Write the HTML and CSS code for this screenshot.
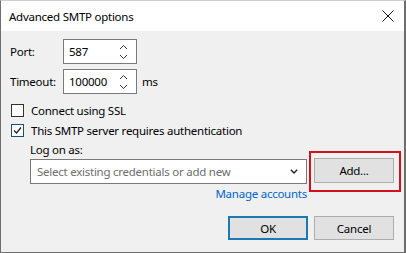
FILE: index.html
```html
<!DOCTYPE html>
<html>
<head>
<meta charset="utf-8">
<link rel="stylesheet" href="styles.css">
</head>
<body>
<div class="window">
  <div class="titlebar">
    <span class="title">Advanced SMTP options</span>
    <svg class="close" width="12" height="12" viewBox="0 0 12 12"><path d="M0.5 0.5 L11.5 11.5 M11.5 0.5 L0.5 11.5" stroke="#111" stroke-width="1" fill="none"/></svg>
  </div>
  <div class="content">
    <div class="field-row">
      <span class="label">Port:</span>
      <div class="spin">
        <span class="spin-value">587</span>
        <svg class="spin-arrows" width="9" height="16" viewBox="0 0 9 16"><path d="M1 5 L4.5 1.5 L8 5 M1 11 L4.5 14.5 L8 11" stroke="#333" stroke-width="1" fill="none"/></svg>
      </div>
    </div>
    <div class="field-row">
      <span class="label">Timeout:</span>
      <div class="spin">
        <span class="spin-value">100000</span>
        <svg class="spin-arrows" width="9" height="16" viewBox="0 0 9 16"><path d="M1 5 L4.5 1.5 L8 5 M1 11 L4.5 14.5 L8 11" stroke="#333" stroke-width="1" fill="none"/></svg>
      </div>
      <span class="unit">ms</span>
    </div>
    <div class="check-row first">
      <span class="box"></span>
      <span>Connect using SSL</span>
    </div>
    <div class="check-row">
      <span class="box checked"><svg width="11" height="11" viewBox="0 0 11 11"><path d="M2 5.5 L4.5 8 L9 2.5" stroke="#222" stroke-width="1.3" fill="none"/></svg></span>
      <span>This SMTP server requires authentication</span>
    </div>
    <div class="logon">
      <div class="logon-label">Log on as:</div>
      <div class="cred-row">
        <div class="combo">
          <span class="placeholder">Select existing credentials or add new</span>
          <svg width="8" height="5" viewBox="0 0 8 5"><path d="M0.8 0.8 L4 4 L7.2 0.8" stroke="#222" stroke-width="1.4" fill="none"/></svg>
        </div>
        <div class="highlight">
          <button class="btn add">Add...</button>
        </div>
      </div>
      <div class="manage-row"><a class="manage">Manage accounts</a></div>
    </div>
    <div class="actions">
      <button class="btn ok">OK</button>
      <button class="btn">Cancel</button>
    </div>
  </div>
</div>
</body>
</html>
```

FILE: styles.css
```css
* { box-sizing: border-box; }
html, body { margin: 0; padding: 0; }
body {
  width: 406px;
  height: 253px;
  font-family: "Noto Sans", "Open Sans", sans-serif;
  font-size: 11.5px;
  letter-spacing: -0.25px;
  color: #000;
  overflow: hidden;
}
.window {
  width: 406px;
  height: 253px;
  border: 1px solid #6e6e6e;
  border-top-color: #cfcfcf;
  border-right-width: 2px;
  background: #f0f0f0;
  display: flex;
  flex-direction: column;
}
.titlebar {
  height: 30px;
  background: #fff;
  display: flex;
  align-items: center;
  justify-content: space-between;
  padding: 0 9px 0 8px;
  flex-shrink: 0;
}
.close { margin-right: 1px; }
.content {
  padding: 8px 0 0 9px;
  display: flex;
  flex-direction: column;
}
.field-row {
  display: flex;
  align-items: center;
  height: 25px;
  margin-bottom: 5px;
}
.label { width: 53px; }
.spin {
  width: 74px;
  height: 25px;
  background: #fff;
  border: 1px solid #7a7a7a;
  display: flex;
  align-items: center;
  justify-content: space-between;
  padding: 0 8px 0 5px;
}
.unit { margin-left: 5px; }
.check-row {
  display: flex;
  align-items: center;
  height: 16px;
  margin-top: 4px;
}
.check-row.first { margin-top: 3px; }
.box {
  width: 13px;
  height: 13px;
  border: 1px solid #333;
  background: #fff;
  margin: 0 7px 0 1px;
  display: flex;
  align-items: center;
  justify-content: center;
}
.box.checked { border-color: #1b4f72; }
.logon {
  padding-left: 20px;
  margin-top: 5px;
}
.logon-label { height: 14px; line-height: 14px; }
.cred-row {
  display: flex;
  align-items: center;
}
.combo {
  width: 277px;
  height: 25px;
  background: #fff;
  border: 1px solid #7a7a7a;
  display: flex;
  align-items: center;
  justify-content: space-between;
  padding: 0 8px 0 6px;
  margin-top: 1px;
}
.placeholder { color: #6d6d6d; }
.highlight {
  margin-left: 2px;
  border: 2px solid #d3101c;
  padding: 5px 5px 7px 3px;
  margin-top: -6px;
  margin-bottom: -8px;
}
.btn {
  font: inherit;
  letter-spacing: inherit;
  color: #000;
  width: 80px;
  height: 24px;
  background: #e1e1e1;
  border: 1px solid #adadad;
  padding: 0;
}
.add { height: 25px; }
.manage-row {
  width: 277px;
  display: flex;
  justify-content: flex-end;
  margin-top: 2px;
}
.manage { color: #0066cc; }
.actions {
  display: flex;
  gap: 6px;
  padding-left: 218px;
  margin-top: 15px;
}
.ok { border: 2px solid #1e78b4; }
```
